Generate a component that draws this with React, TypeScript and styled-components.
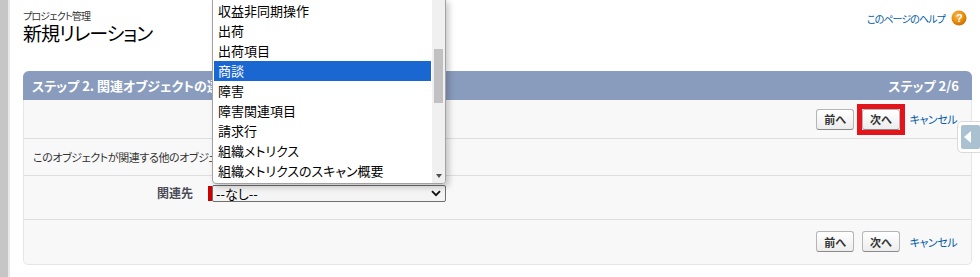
import React from "react";
import styled, { createGlobalStyle } from "styled-components";

const GlobalStyle = createGlobalStyle`
  html, body { margin: 0; padding: 0; background: #fff; }
  body {
    font-family: "Noto Sans CJK JP", "Liberation Sans", sans-serif;
    font-feature-settings: "palt";
    color: #222;
  }
  * { box-sizing: border-box; }
`;

const Page = styled.div`
  position: relative;
  display: flex;
  width: 980px;
  height: 277px;
  overflow: hidden;
`;

const Rail = styled.div`
  width: 10px;
  flex: none;
  background: #c6c6c6;
  border-right: 2px solid #e9e9e9;
`;

const Main = styled.div`
  flex: 1;
  display: flex;
  flex-direction: column;
  padding: 0 8px 0 13px;
`;

const TopBar = styled.div`
  height: 71px;
  display: flex;
  justify-content: space-between;
  align-items: flex-start;
`;

const TitleBlock = styled.div`
  display: flex;
  flex-direction: column;
  gap: 2px;
  padding-top: 10px;
`;

const Breadcrumb = styled.div`
  font-size: 10px;
  line-height: 11px;
  letter-spacing: -0.8px;
  color: #333;
`;

const Title = styled.h1`
  margin: 0;
  font-size: 19px;
  line-height: 20px;
  letter-spacing: -1px;
  font-weight: 400;
  color: #000;
`;

const HelpLink = styled.a`
  display: flex;
  align-items: center;
  gap: 6px;
  margin-top: 10px;
  margin-right: 5px;
  font-size: 10px;
  letter-spacing: -0.9px;
  color: #015ba7;
  text-decoration: none;
`;

const HelpIcon = styled.svg`
  flex: none;
  display: block;
`;

const Panel = styled.div`
  width: 949px;
  height: 194px;
  background: #f8f8f8;
  border: 1px solid #e6e6e6;
  border-top: none;
  border-radius: 6px 6px 5px 5px;
  display: flex;
  flex-direction: column;
`;

const PanelHeader = styled.div`
  height: 29px;
  flex: none;
  display: flex;
  align-items: center;
  justify-content: space-between;
  padding: 0 13px 0 9px;
  background: #8a9cbd;
  border-radius: 6px 6px 0 0;
  margin: 0 -1px;
  color: #fff;
  font-size: 13px;
  font-weight: 700;
`;

const HeaderTitle = styled.h2`
  margin: 0;
  font-size: 13px;
  font-weight: 700;
`;

const Row = styled.div<{ $h: number; $last?: boolean }>`
  height: ${(p) => p.$h}px;
  flex: none;
  border-bottom: ${(p) => (p.$last ? "none" : "1px solid #dedede")};
`;

const ButtonBar = styled(Row)`
  display: flex;
  align-items: center;
  justify-content: flex-end;
  gap: 8px;
  padding-right: 14px;
`;

const Btn = styled.button`
  height: 21px;
  padding: 0 7px;
  margin: 0;
  font-family: "Noto Sans CJK JP", sans-serif;
  font-feature-settings: "palt";
  font-size: 11px;
  font-weight: 700;
  color: #333;
  background: linear-gradient(#ffffff, #ededed);
  border: 1px solid #b5b5b5;
  border-bottom-color: #8a8a8a;
  border-radius: 3px;
`;

const MarkFrame = styled.span`
  display: inline-flex;
  margin: -5px;
  border: 5px solid #e3141b;
`;

const CancelLink = styled.a`
  margin-left: 2px;
  font-size: 11px;
  letter-spacing: -0.5px;
  color: #015ba7;
  text-decoration: none;
`;

const DescRow = styled(Row)`
  display: flex;
  align-items: center;
  padding-left: 9px;
  font-size: 11px;
  letter-spacing: -0.4px;
  color: #333;
`;

const FieldRow = styled(Row)`
  display: grid;
  grid-template-columns: 169px 1fr;
  align-items: start;
  padding-top: 9px;
`;

const FieldLabel = styled.label`
  text-align: right;
  font-size: 12px;
  font-weight: 700;
  line-height: 16px;
  color: #4a4a56;
`;

const FieldCell = styled.div`
  display: flex;
  align-items: center;
  padding-left: 15px;
`;

const Required = styled.span`
  width: 4px;
  height: 15px;
  background: #c00;
`;

const SelectBox = styled.div`
  width: 234px;
  height: 17px;
  display: flex;
  align-items: center;
  justify-content: space-between;
  padding: 0 4px 0 3px;
  border: 1px solid #6f6f6f;
  border-radius: 2px;
  background: #f4f4f4;
  font-size: 13px;
  color: #000;
`;

const DropList = styled.ul`
  position: absolute;
  left: 212px;
  top: -1px;
  width: 234px;
  height: 185px;
  margin: 0;
  padding: 1px 14px 0 1px;
  list-style: none;
  background: #fff;
  border: 1px solid #a2a2a2;
  border-radius: 0 0 4px 4px;
  box-shadow: 3px 3px 6px rgba(0, 0, 0, 0.22);
  overflow: hidden;
`;

const DropItem = styled.li<{ $active?: boolean }>`
  height: 20px;
  line-height: 19px;
  padding-left: 4px;
  font-size: 13px;
  white-space: nowrap;
  color: ${(p) => (p.$active ? "#fff" : "#000")};
  background: ${(p) => (p.$active ? "#1a67d2" : "transparent")};
`;

const ScrollTrack = styled.div`
  position: absolute;
  right: 0;
  top: 0;
  bottom: 0;
  width: 13px;
  background: #f0f0f0;
  display: flex;
  flex-direction: column;
  align-items: center;
`;

const ScrollThumb = styled.div`
  margin-top: 49px;
  width: 9px;
  height: 54px;
  background: #c1c1c1;
`;

const ScrollArrow = styled.div`
  margin-top: auto;
  margin-bottom: 5px;
  width: 0;
  height: 0;
  border-left: 3px solid transparent;
  border-right: 3px solid transparent;
  border-top: 4px solid #505050;
`;

const SideTab = styled.div`
  position: absolute;
  right: -4px;
  top: 121px;
  width: 27px;
  height: 32px;
  padding: 3px;
  background: #fff;
  border: 1px solid #dadada;
  border-radius: 5px;
`;

const SideTabInner = styled.div`
  width: 100%;
  height: 100%;
  background: #a9c1d0;
  border-radius: 2px;
  display: flex;
  align-items: center;
  padding-left: 3px;
`;

const items = [
  "収益非同期操作",
  "出荷",
  "出荷項目",
  "商談",
  "障害",
  "障害関連項目",
  "請求行",
  "組織メトリクス",
  "組織メトリクスのスキャン概要",
];

export default function App() {
  return (
    <>
      <GlobalStyle />
      <Page>
        <Rail />
        <Main>
          <TopBar>
            <TitleBlock>
              <Breadcrumb>プロジェクト管理</Breadcrumb>
              <Title>新規リレーション</Title>
            </TitleBlock>
            <HelpLink href="#">
              このページのヘルプ
              <HelpIcon width="16" height="16" viewBox="0 0 16 16">
                <defs>
                  <radialGradient id="hg" cx="40%" cy="35%" r="70%">
                    <stop offset="0%" stopColor="#f9bb48" />
                    <stop offset="60%" stopColor="#e98b0b" />
                    <stop offset="100%" stopColor="#c46c08" />
                  </radialGradient>
                </defs>
                <circle cx="8" cy="8" r="7.5" fill="url(#hg)" />
                <text
                  x="8"
                  y="12"
                  textAnchor="middle"
                  fontFamily="Liberation Sans, sans-serif"
                  fontWeight="700"
                  fontSize="11"
                  fill="#fff"
                >
                  ?
                </text>
              </HelpIcon>
            </HelpLink>
          </TopBar>
          <Panel>
            <PanelHeader>
              <HeaderTitle>ステップ 2. 関連オブジェクトの選択</HeaderTitle>
              <span>ステップ 2/6</span>
            </PanelHeader>
            <ButtonBar $h={39}>
              <Btn>前へ</Btn>
              <MarkFrame>
                <Btn>次へ</Btn>
              </MarkFrame>
              <CancelLink href="#">キャンセル</CancelLink>
            </ButtonBar>
            <DescRow $h={37}>
              このオブジェクトが関連する他のオブジェクトを選択してください。
            </DescRow>
            <FieldRow $h={44}>
              <FieldLabel>関連先</FieldLabel>
              <FieldCell>
                <Required />
                <SelectBox>
                  <span>--なし--</span>
                  <svg width="10" height="7" viewBox="0 0 10 7">
                    <path d="M1 1.2 L5 5.2 L9 1.2" fill="none" stroke="#111" strokeWidth="1.8" />
                  </svg>
                </SelectBox>
              </FieldCell>
            </FieldRow>
            <ButtonBar $h={43} $last>
              <Btn>前へ</Btn>
              <Btn>次へ</Btn>
              <CancelLink href="#">キャンセル</CancelLink>
            </ButtonBar>
          </Panel>
        </Main>
        <SideTab>
          <SideTabInner>
            <svg width="7" height="12" viewBox="0 0 7 12">
              <path d="M7 0 L0 6 L7 12 Z" fill="#fff" />
            </svg>
          </SideTabInner>
        </SideTab>
        <DropList>
          {items.map((it, i) => (
            <DropItem key={it} $active={i === 3}>
              {it}
            </DropItem>
          ))}
          <ScrollTrack>
            <ScrollThumb />
            <ScrollArrow />
          </ScrollTrack>
        </DropList>
      </Page>
    </>
  );
}
